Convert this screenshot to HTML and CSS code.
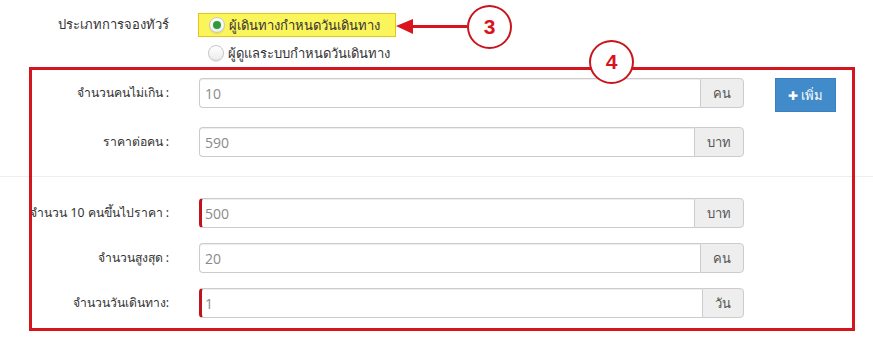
FILE: index.html
```html
<!DOCTYPE html>
<html lang="th">
<head>
    <meta charset="UTF-8">
    <meta name="viewport" content="width=device-width, initial-scale=1.0">
    <title>ประเภทการจองทัวร์</title>
    <link rel="stylesheet" href="styles.css">
</head>
<body>
    <div class="page">
        <div class="group type-group">
            <label class="lbl">ประเภทการจองทัวร์</label>
            <div class="radios">
                <label class="radio mark"><span class="dot on"></span>ผู้เดินทางกำหนดวันเดินทาง</label>
                <label class="radio"><span class="dot"></span>ผู้ดูแลระบบกำหนดวันเดินทาง</label>
            </div>
        </div>

        <div class="group">
            <label class="lbl">จำนวนคนไม่เกิน :</label>
            <div class="ctl">
                <input class="field" type="text" value="10">
                <span class="addon">คน</span>
            </div>
            <button class="btn-add"><span class="plus">✚</span> เพิ่ม</button>
        </div>
        <div class="group">
            <label class="lbl">ราคาต่อคน :</label>
            <div class="ctl">
                <input class="field" type="text" value="590">
                <span class="addon">บาท</span>
            </div>
        </div>

        <hr class="sep">

        <div class="group">
            <label class="lbl">จำนวน 10 คนขึ้นไปราคา :</label>
            <div class="ctl">
                <input class="field req" type="text" value="500">
                <span class="addon">บาท</span>
            </div>
        </div>
        <div class="group">
            <label class="lbl">จำนวนสูงสุด :</label>
            <div class="ctl">
                <input class="field" type="text" value="20">
                <span class="addon">คน</span>
            </div>
        </div>
        <div class="group">
            <label class="lbl">จำนวนวันเดินทาง:</label>
            <div class="ctl">
                <input class="field req" type="text" value="1">
                <span class="addon">วัน</span>
            </div>
        </div>

        <!-- annotations -->
        <div class="frame"></div>
        <div class="arrow"></div>
        <div class="badge b3">3</div>
        <div class="badge b4">4</div>
    </div>
</body>
</html>
```

FILE: styles.css
```css
*{
    margin: 0;
    padding: 0;
    box-sizing: border-box;
}
body{
    font-family: Tahoma, "Noto Sans", sans-serif;
    font-size: 13px;
    color: #333;
    background: #fff;
}
.page{
    position: relative;
    width: 873px;
    height: 337px;
    overflow: hidden;
    padding-top: 13px;
}
.group{
    display: flex;
    align-items: flex-start;
    margin-bottom: 15px;
}
.lbl{
    flex: 0 0 169px;
    text-align: right;
    line-height: 30px;
    white-space: nowrap;
    font-size: 12.2px;
}
.type-group{
    margin-bottom: 13px;
}
.type-group .lbl{
    line-height: 22px;
    font-size: 13px;
}
.radios{
    margin-left: 29px;
    display: flex;
    flex-direction: column;
    align-items: flex-start;
}
.radio{
    display: flex;
    align-items: center;
    height: 24px;
    padding: 0 15px 0 10px;
    margin-bottom: 4px;
}
.radio:last-child{
    margin-bottom: 0;
}
.radio.mark{
    background: #fbf55c;
    border: 1px solid #e3c51c;
}
.dot{
    width: 16px;
    height: 16px;
    border-radius: 50%;
    border: 1px solid #c8c8c8;
    background: linear-gradient(#fff, #ececec);
    box-shadow: 0 1px 1px rgba(0,0,0,.1);
    margin-right: 4px;
    display: flex;
    align-items: center;
    justify-content: center;
}
.dot.on::after{
    content: "";
    width: 8px;
    height: 8px;
    border-radius: 50%;
    background: #2f9a3c;
}
.ctl{
    margin-left: 30px;
    width: 545px;
    display: flex;
    height: 30px;
}
.field{
    flex: 1;
    min-width: 0;
    height: 30px;
    border: 1px solid #ccc;
    border-right: none;
    border-radius: 4px 0 0 4px;
    padding: 0 5px;
    font-family: "Open Sans", "Noto Sans", sans-serif;
    font-size: 14px;
    color: #8a8a8a;
    box-shadow: inset 0 1px 1px rgba(0,0,0,.075);
}
.field.req{
    border-left: 3px solid #c0141c;
    padding-left: 3px;
}
.addon{
    height: 30px;
    padding: 0 12px;
    line-height: 28px;
    background: #eee;
    border: 1px solid #ccc;
    border-radius: 0 4px 4px 0;
    color: #555;
}
.btn-add{
    margin-left: 31px;
    width: 61px;
    height: 34px;
    border: 1px solid #3c7fbf;
    background: #428bca;
    color: #fff;
    font-family: inherit;
    font-size: 13px;
}
.plus{
    font-size: 12px;
}
.sep{
    border: none;
    border-top: 1px solid #eee;
    margin: 19px 0 21px;
}
.frame{
    position: absolute;
    left: 29px;
    top: 67px;
    width: 826px;
    height: 264px;
    border: 3px solid #d5151d;
}
.arrow{
    position: absolute;
    left: 412px;
    top: 25px;
    width: 55px;
    height: 3px;
    background: #d9141c;
}
.arrow::before{
    content: "";
    position: absolute;
    left: -16px;
    top: -6px;
    border-style: solid;
    border-width: 7px 17px 8px 0;
    border-color: transparent #d9141c transparent transparent;
}
.badge{
    position: absolute;
    width: 45px;
    height: 44px;
    border: 2px solid #c8161e;
    border-radius: 50%;
    background: #fff;
    color: #d8141c;
    font-family: "Liberation Sans", Arial, sans-serif;
    font-weight: bold;
    font-size: 21px;
    display: flex;
    align-items: center;
    justify-content: center;
}
.b3{
    left: 467px;
    top: 5px;
}
.b4{
    left: 589px;
    top: 40px;
}
```
